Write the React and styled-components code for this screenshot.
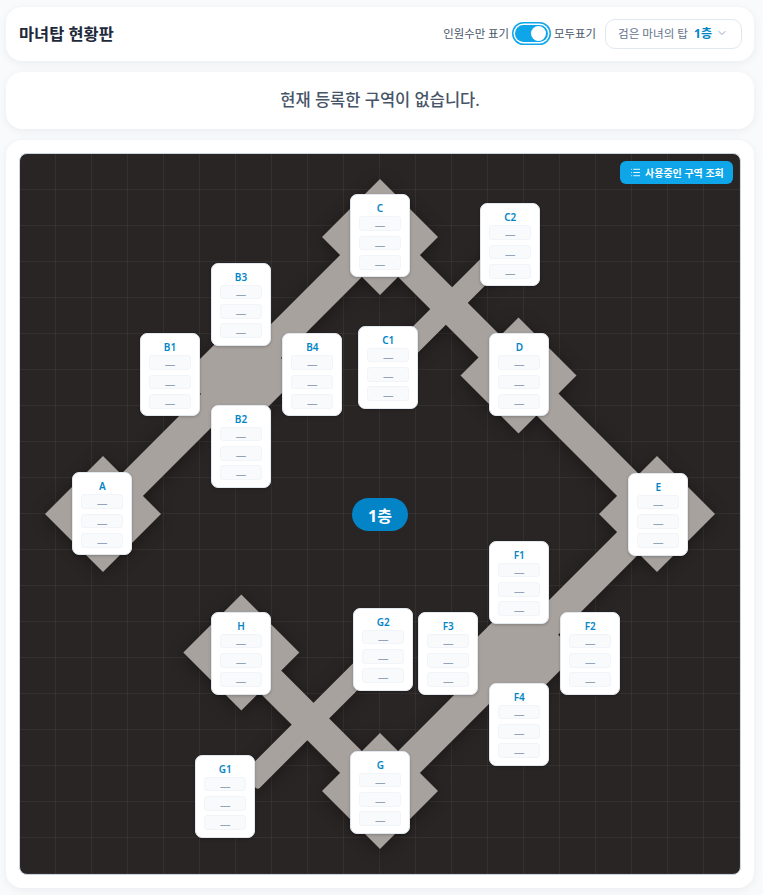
import styled, { createGlobalStyle } from "styled-components"
import { ChevronDown, List } from "lucide-react"

const GlobalStyle = createGlobalStyle`
  * { box-sizing: border-box; }
  html, body { margin: 0; padding: 0; }
  body {
    background: #f8fafc;
    font-family: "Noto Sans", "Noto Sans CJK KR", sans-serif;
    color: #1e293b;
  }
`

const Page = styled.div`
  display: flex;
  flex-direction: column;
  gap: 11px;
  padding: 7px 9px 7px 6px;
  height: 895px;
`

const Panel = styled.div`
  background: #fff;
  border-radius: 16px;
  box-shadow: 0 2px 10px rgba(15, 23, 42, 0.06);
`

const Header = styled(Panel)`
  height: 54px;
  padding: 0 12px 2px 13px;
  display: flex;
  align-items: center;
  justify-content: space-between;
`

const Title = styled.h1`
  margin: 0;
  font-size: 16.4px;
  font-weight: 700;
  color: #1e293b;
`

const Controls = styled.div`
  display: flex;
  align-items: center;
  margin-top: 2px;
`

const ToggleLabel = styled.span`
  margin-bottom: 2px;
  font-size: 11.4px;
  color: #475569;
`

const Toggle = styled.div`
  width: 32.5px;
  height: 17.5px;
  margin: -1px 6.5px 0 6px;
  padding: 1.25px;
  display: flex;
  justify-content: flex-end;
  border-radius: 10px;
  background: #0ea5e9;
  box-shadow: 0 0 0 1.5px #fff, 0 0 0 3px #0ea5e9;
`

const Knob = styled.div`
  width: 15px;
  height: 15px;
  border-radius: 50%;
  background: #fff;
`

const Select = styled.div`
  width: 137px;
  height: 30px;
  margin-left: 9px;
  padding: 0 13px 2px 12px;
  display: flex;
  align-items: center;
  border: 1px solid #e2e8f0;
  border-radius: 10px;
  font-size: 11.6px;
  color: #64748b;
`

const Floor = styled.b`
  margin-left: 6px;
  font-size: 12px;
  font-weight: 700;
  color: #0284c7;
`

const SelectIcon = styled(ChevronDown)`
  margin-left: auto;
  color: #94a3b8;
`

const Notice = styled(Panel)`
  height: 57px;
  padding-bottom: 3px;
  display: flex;
  align-items: center;
  justify-content: center;
  font-size: 16.5px;
  font-weight: 500;
  color: #475569;
`

const MapPanel = styled(Panel)`
  flex: 1;
  padding: 13px;
`

const Board = styled.div`
  position: relative;
  width: 722px;
  height: 722px;
  overflow: hidden;
  border: 1px solid #cbd5e1;
  border-radius: 8px;
  background-color: #292524;
  background-image:
    linear-gradient(rgba(255, 255, 255, 0.05) 1px, transparent 1px),
    linear-gradient(90deg, rgba(255, 255, 255, 0.05) 1px, transparent 1px);
  background-size: 36px 36px;
  background-position: -1px -1px;
`

const Roads = styled.svg`
  position: absolute;
  inset: 0;
  filter: drop-shadow(0 3px 8px rgba(0, 0, 0, 0.35));
`

const ZoneButton = styled.div`
  position: absolute;
  top: 7px;
  right: 7px;
  width: 113px;
  height: 23px;
  padding-left: 10px;
  display: flex;
  align-items: center;
  gap: 4px;
  border-radius: 6px;
  background: #0ea5e9;
  color: #fff;
  font-size: 10px;
  font-weight: 600;
`

const FloorBadge = styled.div`
  position: absolute;
  left: 332px;
  top: 344px;
  width: 56px;
  height: 33px;
  display: flex;
  align-items: center;
  justify-content: center;
  border-radius: 17px;
  background: #0284c7;
  color: #fff;
  font-size: 16px;
  font-weight: 700;
`

const Zone = styled.div`
  position: absolute;
  left: ${(p) => p.$x}px;
  top: ${(p) => p.$y}px;
  width: 60px;
  height: 83px;
  padding: 7px 8px 0;
  background: #fff;
  border: 1px solid #e2e8f0;
  border-radius: 7px;
  box-shadow: 0 1px 3px rgba(0, 0, 0, 0.22);
`

const ZoneName = styled.div`
  height: 13px;
  margin-bottom: 1px;
  text-align: center;
  font-size: 10px;
  line-height: 13px;
  font-weight: 600;
  color: #0284c7;
`

const Slots = styled.div`
  display: flex;
  flex-direction: column;
  gap: 4.7px;
`

const Slot = styled.div`
  height: 14.7px;
  padding-top: 3px;
  display: flex;
  align-items: center;
  justify-content: center;
  background: #f8fafc;
  border: 1px solid #f1f5f9;
  border-radius: 3px;
  font-size: 10.5px;
  line-height: 10px;
  color: #94a3b8;
`

const diamonds = [
  [83, 360], [221, 222], [360, 83], [498.5, 221.5],
  [637, 360], [499, 499.5], [360, 637], [221.3, 498.5],
]

const roads = [
  { from: [83, 360], to: [360, 83], w: 31 },
  { from: [360, 83], to: [637, 360], w: 31 },
  { from: [637, 360], to: [360, 637], w: 31 },
  { from: [221.3, 498.5], to: [360, 637], w: 31 },
  { from: [368, 213], to: [490, 91], w: 22 },
  { from: [230, 628], to: [363, 495], w: 22 },
]

const zones = [
  ["A", 52.3, 318.3], ["B1", 120, 179.3], ["B3", 191, 108.7], ["B4", 262.3, 179.3],
  ["B2", 191, 250.7], ["C", 330, 40.3], ["C2", 460.3, 49.3], ["C1", 338.3, 171.7],
  ["D", 469.3, 179.3], ["E", 608.3, 318.7], ["F1", 469.3, 386.7], ["F2", 540.3, 457.7],
  ["F3", 398.3, 457.7], ["F4", 469.3, 528.7], ["G2", 333.3, 453.7], ["H", 191, 457.7],
  ["G1", 175.3, 600.7], ["G", 330.3, 596.7],
]

const Road = ({ from, to, w }) => {
  const dx = to[0] - from[0]
  const dy = to[1] - from[1]
  const len = Math.hypot(dx, dy)
  const angle = (Math.atan2(dy, dx) * 180) / Math.PI
  return (
    <rect
      x={0}
      y={-w / 2}
      width={len}
      height={w}
      rx={3}
      fill="#a8a29e"
      transform={`translate(${from[0]} ${from[1]}) rotate(${angle})`}
    />
  )
}

const App = () => {
  return (
    <Page>
      <GlobalStyle />
      <Header>
        <Title>마녀탑 현황판</Title>
        <Controls>
          <ToggleLabel>인원수만 표기</ToggleLabel>
          <Toggle>
            <Knob />
          </Toggle>
          <ToggleLabel>모두표기</ToggleLabel>
          <Select>
            검은 마녀의 탑
            <Floor>1층</Floor>
            <SelectIcon size={12} />
          </Select>
        </Controls>
      </Header>
      <Notice>현재 등록한 구역이 없습니다.</Notice>
      <MapPanel>
        <Board>
          <Roads width="720" height="720" viewBox="0 0 720 720">
            {roads.map((r, i) => (
              <Road key={i} {...r} />
            ))}
            {diamonds.map(([x, y]) => (
              <polygon
                key={`${x}-${y}`}
                fill="#a8a29e"
                points={`${x - 58},${y} ${x},${y - 58} ${x + 58},${y} ${x},${y + 58}`}
              />
            ))}
          </Roads>
          <ZoneButton>
            <List size={11} />
            사용중인 구역 조회
          </ZoneButton>
          <FloorBadge>1층</FloorBadge>
          {zones.map(([name, x, y]) => (
            <Zone key={name} $x={x} $y={y}>
              <ZoneName>{name}</ZoneName>
              <Slots>
                <Slot>—</Slot>
                <Slot>—</Slot>
                <Slot>—</Slot>
              </Slots>
            </Zone>
          ))}
        </Board>
      </MapPanel>
    </Page>
  )
}

export default App
